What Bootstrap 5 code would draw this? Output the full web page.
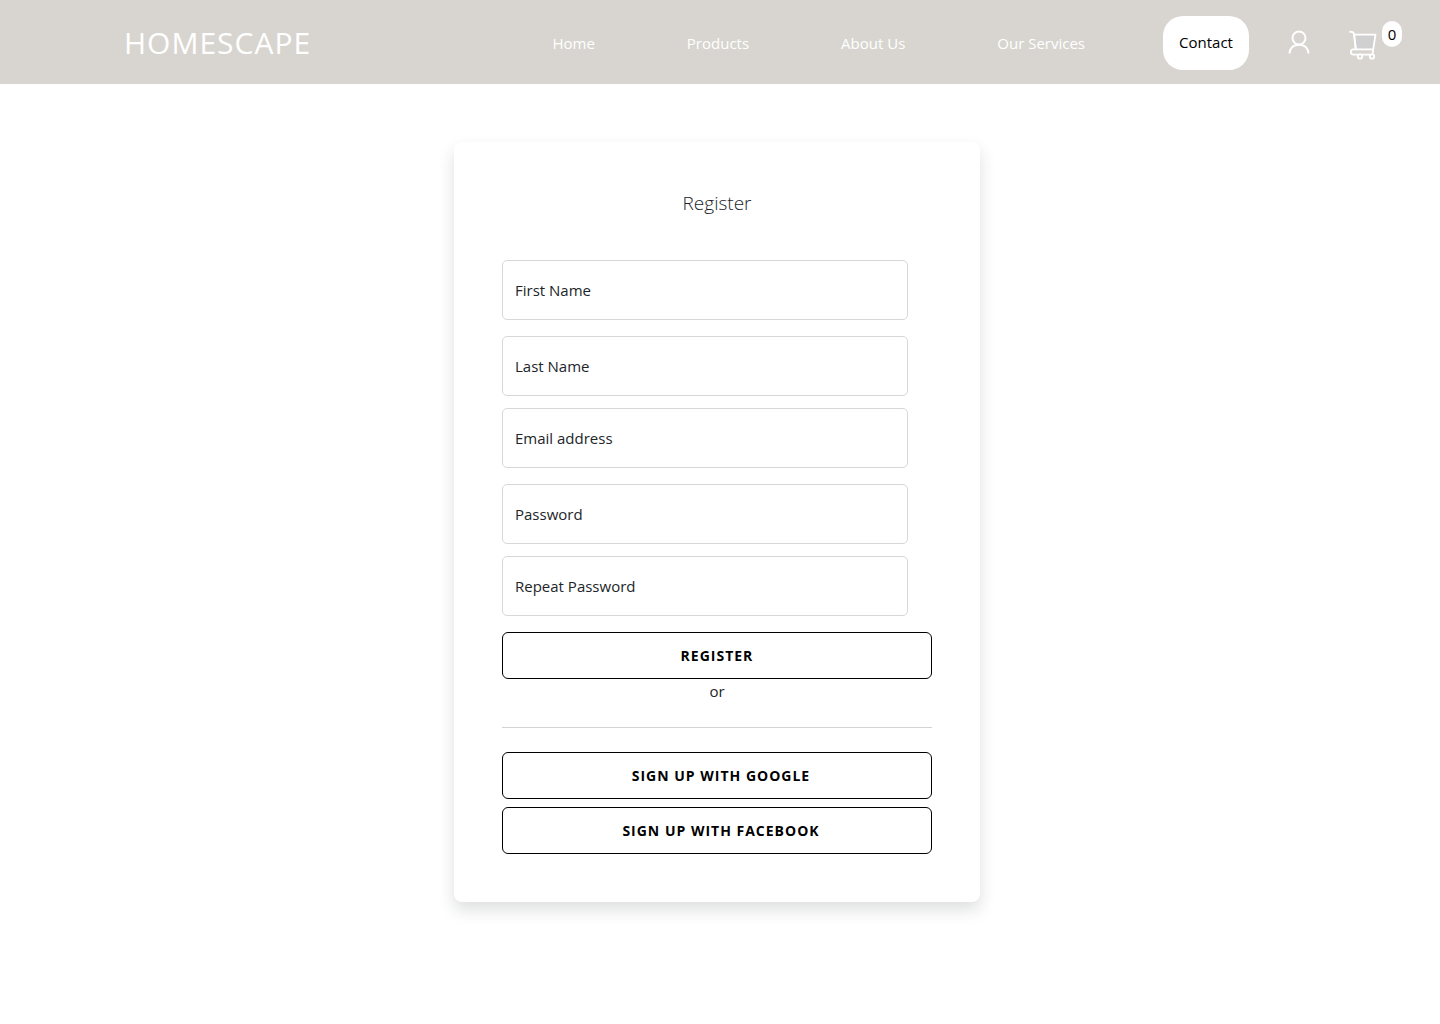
<!DOCTYPE html>
<html lang="en">
<head>
<meta charset="utf-8">
<meta name="viewport" content="width=device-width, initial-scale=1">
<title>Homescape - Register</title>
<link href="https://cdn.jsdelivr.net/npm/bootstrap@5.3.0/dist/css/bootstrap.min.css" rel="stylesheet">
<style>
  body { font-family: "Open Sans", "Noto Sans", sans-serif; font-size: 15px; line-height: 24px; color: #212529; }
  .site-bar { background: #d8d5d0; min-height: 84px; padding: 2px 39px 0 124px; }
  .site-bar .navbar-brand { color: #fff; font-size: 30px; line-height: 40px; letter-spacing: 1px; font-weight: 400; }
  .site-links { gap: 92px; }
  .site-links .nav-link { color: #fff; padding: 0; }
  .btn-contact { background: #fff; color: #000; border: 0; border-radius: 20px; height: 54px; width: 86px; padding: 0; font-size: 15px; margin: -1px 39px 0 78px; }
  .btn-contact:hover { background: #f3f2f0; }
  .cart-link { margin: 4px 24px 0 39px; }
  .cart-count { position: absolute; left: 33px; top: -9px; width: 20px; height: 26px; border-radius: 10px; background: #fff; color: #000; line-height: 26px; text-align: center; }
  .page-main { padding: 58px 6px 58px 0; }
  .register-card { max-width: 526px; border: 0; border-radius: 8px; padding: 48px; }
  .register-title { font-size: 19px; line-height: 26px; font-weight: 300; margin-bottom: 44px; }
  .field-pair { display: flex; flex-direction: column; gap: 16px; margin-bottom: 12px; padding-right: 24px; }
  .field-pair:last-of-type { margin-bottom: 16px; }
  .form-floating > .form-control { height: 60px; min-height: 60px; border-color: #d6d8da; border-radius: 5px; font-size: 15px; }
  .form-floating > label { padding: 18px 13px; line-height: 24px; color: #212529; border: 0; }
  .btn-line { height: 47px; border: 1px solid #000; border-radius: 6px; background: #fff; color: #000; font-size: 14px; font-weight: 700; letter-spacing: 1px; text-transform: uppercase; }
  .btn-social { padding-left: 20px; }
  .btn-line:hover { background: #000; color: #fff; }
  .rule { border-color: #212529; margin: 24px 0; opacity: .2; }
</style>
<script src="https://cdn.jsdelivr.net/npm/bootstrap@5.3.0/dist/js/bootstrap.bundle.min.js" defer></script>
</head>
<body>
<header class="site-bar navbar flex-nowrap">
  <a class="navbar-brand p-0 m-0" href="#">HOMESCAPE</a>
  <nav class="d-flex align-items-center ms-auto">
    <div class="site-links d-flex">
      <a class="nav-link" href="#">Home</a>
      <a class="nav-link" href="#">Products</a>
      <a class="nav-link" href="#">About Us</a>
      <a class="nav-link" href="#">Our Services</a>
    </div>
    <button type="button" class="btn btn-contact">Contact</button>
    <a class="d-flex" href="#" aria-label="Account">
      <svg width="22" height="26" viewBox="0 0 22 26" fill="none" stroke="#fff" stroke-width="2"><circle cx="11" cy="8" r="6.5"/><path d="M1.500 23.500C1.800 18.500 5 14.700 11 14.700S20.200 18.500 20.500 23.500"/></svg>
    </a>
    <a class="cart-link d-flex position-relative" href="#" aria-label="Cart">
      <svg width="28" height="30" viewBox="0 0 28 30" fill="none" stroke="#fff" stroke-width="1.800" stroke-linejoin="round" stroke-linecap="round"><path d="M5.200 4.700H26.500L24.200 19.300H6.800Z" fill="#d0d0d0"/><path d="M.9 1.800H2.500Q4.300 1.800 4.900 3.600L6.800 19.300H4.500A2.700 2.700 0 0 0 4.500 24.700H23.500L24.200 19.300" fill="none"/><circle cx="11" cy="26.500" r="2.200" fill="#d8d5d0"/><circle cx="23" cy="26.500" r="2.200" fill="#d8d5d0"/></svg>
      <span class="cart-count">0</span>
    </a>
  </nav>
</header>

<main class="page-main">
  <div class="register-card card shadow mx-auto">
    <h1 class="register-title text-center">Register</h1>
    <form>
      <div class="field-pair">
        <div class="form-floating">
          <input type="text" class="form-control" id="firstName" placeholder=" ">
          <label for="firstName">First Name</label>
        </div>
        <div class="form-floating">
          <input type="text" class="form-control" id="lastName" placeholder=" ">
          <label for="lastName">Last Name</label>
        </div>
      </div>
      <div class="field-pair">
        <div class="form-floating">
          <input type="email" class="form-control" id="email" placeholder=" ">
          <label for="email">Email address</label>
        </div>
        <div class="form-floating">
          <input type="password" class="form-control" id="password" placeholder=" ">
          <label for="password">Password</label>
        </div>
      </div>
      <div class="field-pair">
        <div class="form-floating">
          <input type="password" class="form-control" id="repeat" placeholder=" ">
          <label for="repeat">Repeat Password</label>
        </div>
      </div>
      <button type="submit" class="btn btn-line w-100">Register</button>
    </form>
    <div class="text-center">or</div>
    <hr class="rule">
    <div class="d-grid gap-2">
      <button type="button" class="btn btn-line btn-social">Sign up with Google</button>
      <button type="button" class="btn btn-line btn-social">Sign up with Facebook</button>
    </div>
  </div>
</main>
</body>
</html>
